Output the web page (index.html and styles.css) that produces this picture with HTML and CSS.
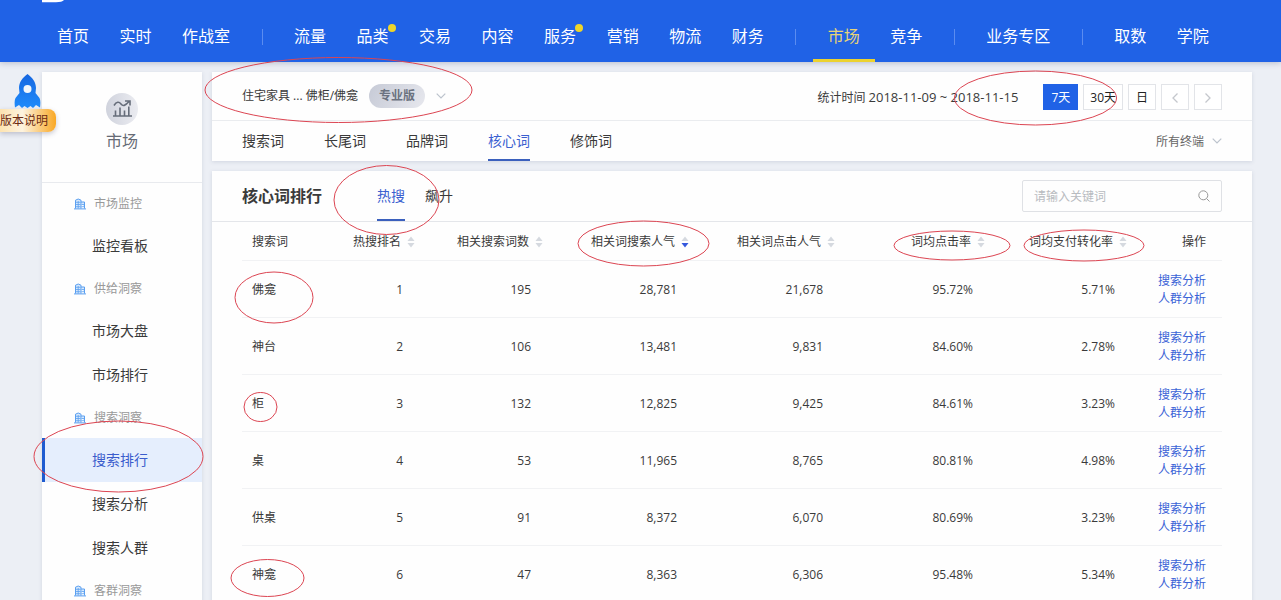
FILE: index.html
```html
<!DOCTYPE html>
<html lang="zh-CN">
<head>
<meta charset="utf-8">
<title>市场 - 搜索排行</title>
<link rel="stylesheet" href="styles.css">
</head>
<body>
<svg class="defs" width="0" height="0" aria-hidden="true">
  <defs>
    <symbol id="building" viewBox="0 0 12 12">
      <path d="M1.500 10.500V2.200L4.200 1 7 2.200v8.300M7 4h3.500v6.500M0 10.900h12" fill="#d6e8fc" stroke="#5a9ff0"/>
      <path d="M2 4.300h4.500M2 6.500h4.500M2 8.700h4.500M4.200 3v7.500M7.500 6.500h2.500M7.500 8.700h2.500" stroke="#5a9ff0" stroke-width=".8" fill="none"/>
    </symbol>
    <symbol id="chevron" viewBox="0 0 10 6">
      <path d="M.7.7 5 5 9.3.7" fill="none" stroke="currentColor" stroke-width="1.2"/>
    </symbol>
    <symbol id="sort-up" viewBox="0 0 8 12"><path d="M4 .5 7.500 5h-7z"/></symbol>
    <symbol id="sort-down" viewBox="0 0 8 12"><path d="M4 11.500.5 7h7z"/></symbol>
  </defs>
</svg>

<header class="topbar">
  <svg class="logo" viewBox="0 0 22 3" aria-hidden="true"><path d="M0 0h22q-2 2.200-8 2.200H0z" fill="#fff"/></svg>
  <nav class="nav">
    <a href="#">首页</a>
    <a href="#">实时</a>
    <a href="#">作战室</a>
    <span class="divider"></span>
    <a href="#">流量</a>
    <a href="#" class="dot">品类</a>
    <a href="#">交易</a>
    <a href="#">内容</a>
    <a href="#" class="dot">服务</a>
    <a href="#">营销</a>
    <a href="#">物流</a>
    <a href="#">财务</a>
    <span class="divider"></span>
    <a href="#" class="active">市场</a>
    <a href="#">竞争</a>
    <span class="divider"></span>
    <a href="#">业务专区</a>
    <span class="divider"></span>
    <a href="#">取数</a>
    <a href="#">学院</a>
  </nav>
</header>

<div class="page">
  <aside class="sidebar">
    <div class="side-head">
      <svg class="side-icon" viewBox="0 0 32 32" aria-hidden="true">
        <defs><linearGradient id="disc" x1="0" y1="0" x2="1" y2="0"><stop offset="0" stop-color="#d0d3dd"/><stop offset="1" stop-color="#ebecf1"/></linearGradient></defs>
        <circle cx="16" cy="16" r="16" fill="url(#disc)"/>
        <path d="M7 23h19M9.500 22.500v-5M14 22.500v-8M18.500 22.500v-5M22.800 22.500v-9M8 12.500c2.500-4 5-4 7-1.500s4 2 8-2.500M19 8h5v4.500" fill="none" stroke="#666d7a" stroke-width="1.600"/>
      </svg>
      <span>市场</span>
    </div>
    <h3><svg><use href="#building"/></svg>市场监控</h3>
    <a href="#">监控看板</a>
    <h3><svg><use href="#building"/></svg>供给洞察</h3>
    <a href="#">市场大盘</a>
    <a href="#">市场排行</a>
    <h3><svg><use href="#building"/></svg>搜索洞察</h3>
    <a href="#" class="active">搜索排行</a>
    <a href="#">搜索分析</a>
    <a href="#">搜索人群</a>
    <h3><svg><use href="#building"/></svg>客群洞察</h3>
  </aside>

  <main class="main">
    <section class="card">
      <div class="filter">
        <button type="button" class="category">住宅家具 ... 佛柜/佛龛 <span class="badge">专业版</span><svg class="chev"><use href="#chevron"/></svg></button>
        <div class="dates">
          <span class="period">统计时间 <span class="range">2018-11-09 ~ 2018-11-15</span></span>
          <button type="button" class="btn on">7天</button>
          <button type="button" class="btn">30天</button>
          <button type="button" class="btn">日</button>
          <button type="button" class="btn" aria-label="上一个"><svg class="arrow" viewBox="0 0 8 12"><path d="M6.500 1.500 2 6l4.500 4.500"/></svg></button>
          <button type="button" class="btn" aria-label="下一个"><svg class="arrow" viewBox="0 0 8 12"><path d="M1.500 1.500 6 6l-4.500 4.500"/></svg></button>
        </div>
      </div>
      <div class="tabs-row">
        <nav class="tabs">
          <a href="#">搜索词</a>
          <a href="#">长尾词</a>
          <a href="#">品牌词</a>
          <a href="#" class="active">核心词</a>
          <a href="#">修饰词</a>
        </nav>
        <label class="terminal">
          <select aria-label="终端"><option>所有终端</option></select>
          <svg class="chev"><use href="#chevron"/></svg>
        </label>
      </div>
    </section>

    <section class="card rank">
      <div class="rank-head">
        <h2>核心词排行</h2>
        <nav class="subtabs">
          <a href="#" class="active">热搜</a>
          <a href="#">飙升</a>
        </nav>
        <label class="search">
          <input type="text" placeholder="请输入关键词" aria-label="关键词">
          <svg viewBox="0 0 12 12"><circle cx="5.300" cy="5.300" r="4.500"/><path d="M8.600 8.600 11.500 11.500"/></svg>
        </label>
      </div>
      <div class="table-wrap">
        <table>
          <colgroup><col class="c1"><col class="c2"><col class="c3"><col class="c4"><col class="c4"><col class="c5"><col class="c6"><col class="c7"></colgroup>
          <thead>
            <tr>
              <th>搜索词</th>
              <th>热搜排名<svg class="sort"><use href="#sort-up"/><use href="#sort-down"/></svg></th>
              <th>相关搜索词数<svg class="sort"><use href="#sort-up"/><use href="#sort-down"/></svg></th>
              <th>相关词搜索人气<svg class="sort"><use href="#sort-up"/><use class="on" href="#sort-down"/></svg></th>
              <th>相关词点击人气<svg class="sort"><use href="#sort-up"/><use href="#sort-down"/></svg></th>
              <th>词均点击率<svg class="sort"><use href="#sort-up"/><use href="#sort-down"/></svg></th>
              <th>词均支付转化率<svg class="sort"><use href="#sort-up"/><use href="#sort-down"/></svg></th>
              <th>操作</th>
            </tr>
          </thead>
          <tbody>
            <tr><td>佛龛</td><td>1</td><td>195</td><td>28,781</td><td>21,678</td><td>95.72%</td><td>5.71%</td><td><a href="#">搜索分析</a><a href="#">人群分析</a></td></tr>
            <tr><td>神台</td><td>2</td><td>106</td><td>13,481</td><td>9,831</td><td>84.60%</td><td>2.78%</td><td><a href="#">搜索分析</a><a href="#">人群分析</a></td></tr>
            <tr><td>柜</td><td>3</td><td>132</td><td>12,825</td><td>9,425</td><td>84.61%</td><td>3.23%</td><td><a href="#">搜索分析</a><a href="#">人群分析</a></td></tr>
            <tr><td>桌</td><td>4</td><td>53</td><td>11,965</td><td>8,765</td><td>80.81%</td><td>4.98%</td><td><a href="#">搜索分析</a><a href="#">人群分析</a></td></tr>
            <tr><td>供桌</td><td>5</td><td>91</td><td>8,372</td><td>6,070</td><td>80.69%</td><td>3.23%</td><td><a href="#">搜索分析</a><a href="#">人群分析</a></td></tr>
            <tr><td>神龛</td><td>6</td><td>47</td><td>8,363</td><td>6,306</td><td>95.48%</td><td>5.34%</td><td><a href="#">搜索分析</a><a href="#">人群分析</a></td></tr>
          </tbody>
        </table>
      </div>
    </section>
  </main>
</div>

<a href="#" class="version">
  <svg viewBox="0 0 28 35" aria-hidden="true">
    <defs><linearGradient id="hull" x1="0" y1="0" x2="0" y2="1"><stop offset="0" stop-color="#1767e0"/><stop offset="1" stop-color="#1f8bfb"/></linearGradient></defs>
    <path d="M13.500 0c5 3.500 8.500 8.500 8.500 14l-.5 5 4 5c1.200 2.500 1 6 .5 9.500l-4-2.500-3 3-2.500-2-3 2-3-2-2.500 2-3-3-4 2.500C.5 30 .3 26.500 1.500 24l4-5-.5-5c0-5.500 3.500-10.500 8.500-14z" fill="url(#hull)"/>
    <circle cx="13.500" cy="15" r="4" fill="#f2f6fb"/>
  </svg>
  <span>版本说明</span>
</a>

<svg class="marks" width="1281" height="600" viewBox="0 0 1281 600" aria-hidden="true">
  <ellipse cx="338.500" cy="90" rx="133.500" ry="32.500"/>
  <ellipse cx="1035.500" cy="98" rx="81" ry="27"/>
  <ellipse cx="386.500" cy="200" rx="52.500" ry="34.500"/>
  <ellipse cx="643.500" cy="243.500" rx="65.500" ry="22.500"/>
  <ellipse cx="952" cy="245.500" rx="58" ry="14.500"/>
  <ellipse cx="1084" cy="245.500" rx="60" ry="15.500"/>
  <ellipse cx="274" cy="297.500" rx="39" ry="25.500"/>
  <ellipse cx="260.500" cy="407" rx="16.500" ry="14.500"/>
  <ellipse cx="118.500" cy="456.500" rx="84.500" ry="35.500"/>
  <ellipse cx="267.500" cy="578" rx="36.500" ry="18.500"/>
</svg>
</body>
</html>
```

FILE: styles.css
```css
* { box-sizing: border-box; }

body {
  margin: 0;
  height: 100vh;
  overflow: hidden;
  position: relative;
  background: #eceff5;
  color: #3a3a3a;
  font: 12px/18px "Open Sans", "Noto Sans CJK SC", sans-serif;
}

a { color: inherit; text-decoration: none; }
button, input, select { font: inherit; color: inherit; }
h2, h3 { margin: 0; font-weight: 400; }
.defs { position: absolute; }

.topbar {
  position: relative;
  height: 62px;
  padding: 12px 57px 0 42px;
  background: #2062e6;
  box-shadow: 0 1px 6px rgba(60, 70, 110, 0.3);
}
.logo { position: absolute; left: 42px; top: 0; width: 22px; height: 3px; }
.nav {
  display: flex;
  justify-content: space-between;
  align-items: center;
  height: 50px;
  font-size: 16px;
  color: #fff;
}
.nav a {
  position: relative;
  height: 50px;
  padding: 0 15px;
  line-height: 48px;
  white-space: nowrap;
}
.nav .active { color: #e8d477; border-bottom: 3px solid #ecd22e; }
.nav .dot::after {
  content: "";
  position: absolute;
  right: 8px;
  top: 12px;
  width: 8px;
  height: 8px;
  border-radius: 50%;
  background: #edd52a;
}
.divider { width: 1px; height: 16px; margin: 0 16px; background: #5b8cf0; }

.page { display: flex; gap: 10px; padding: 10px 29px 0 42px; }

.sidebar, .card { background: #fefefe; box-shadow: 0 1px 4px rgba(70, 80, 120, 0.16); }
.sidebar { flex: 0 0 160px; }
.side-head {
  display: flex;
  flex-direction: column;
  align-items: center;
  gap: 4px;
  height: 111px;
  padding-top: 21px;
  border-bottom: 1px solid #e8eaee;
  font-size: 16px;
  line-height: 24px;
  color: #666b75;
}
.side-icon { width: 32px; height: 32px; }
.sidebar h3 {
  display: flex;
  align-items: center;
  gap: 8px;
  height: 41px;
  padding-left: 32px;
  font-size: 12px;
  color: #999;
}
.sidebar h3 svg { width: 12px; height: 12px; }
.sidebar a {
  display: block;
  height: 44px;
  padding-left: 50px;
  font-size: 14px;
  line-height: 44px;
}
.sidebar .active {
  padding-left: 47px;
  border-left: 3px solid #1e5bd0;
  background: #e5eefd;
  color: #3a5ccc;
}

.main { flex: 1; min-width: 0; display: flex; flex-direction: column; gap: 10px; }
.filter, .tabs-row, .rank-head {
  display: flex;
  justify-content: space-between;
  align-items: center;
  padding: 0 30px;
}
.filter { height: 49px; border-bottom: 1px solid #eaecef; }
.category {
  display: flex;
  align-items: center;
  gap: 11px;
  padding: 0;
  border: 0;
  background: none;
}
.badge {
  padding: 0 10px;
  border-radius: 12px;
  background: linear-gradient(120deg, #c6cad6, #e7e8ee);
  color: #6b7280;
  font-weight: 700;
  line-height: 24px;
}
.chev { width: 10px; height: 6px; color: #bcc3cd; }
.dates { display: flex; align-items: center; gap: 5px; padding-top: 2px; }
.period { margin-right: 20px; white-space: nowrap; }
.range { font-size: 13px; }
.btn {
  display: flex;
  align-items: center;
  justify-content: center;
  min-width: 28px;
  height: 26px;
  padding: 1px 6px 0;
  border: 1px solid #e2e4e8;
  background: #fff;
  color: #222;
}
.btn.on { padding: 1px 7px 0; border-color: #2062e6; background: #2062e6; color: #fff; }
.arrow { width: 8px; height: 12px; fill: none; stroke: #c4c7cc; stroke-width: 1.3; }

.tabs-row { height: 40px; }
.tabs { display: flex; gap: 40px; font-size: 14px; }
.tabs a, .subtabs a { border-bottom: 2px solid transparent; }
.tabs a { height: 40px; line-height: 40px; }
.tabs .active, .subtabs .active { border-color: #3b60bd; color: #3a5fd0; }
.terminal { display: flex; align-items: center; gap: 7px; color: #666; }
.terminal select {
  padding: 2px 0 0;
  border: 0;
  background: none;
  appearance: none;
}

.rank { flex: 1; }
.rank-head { height: 51px; border-bottom: 1px solid #e4e6ea; }
.rank-head h2 { font-size: 16px; font-weight: 700; line-height: 24px; }
.subtabs { display: flex; gap: 20px; margin: 0 auto 0 55px; font-size: 14px; }
.subtabs a { height: 50px; line-height: 50px; }
.search {
  display: flex;
  align-items: center;
  width: 200px;
  height: 32px;
  padding: 0 11px;
  border: 1px solid #dfe1e5;
  border-radius: 2px;
}
.search input {
  flex: 1;
  min-width: 0;
  padding: 1px 0 0;
  border: 0;
  outline: 0;
  background: none;
}
.search input::placeholder { color: #b8bbc0; }
.search svg { width: 12px; height: 12px; fill: none; stroke: #999; }

.table-wrap { padding: 0 30px; }
table { width: 100%; table-layout: fixed; border-spacing: 0; }
.c1 { width: 90px; }
.c2 { width: 83px; }
.c3 { width: 128px; }
.c4 { width: 146px; }
.c5 { width: 150px; }
.c6 { width: 142px; }
.c7 { width: 95px; }
th, td { border-bottom: 1px solid #f1f2f4; text-align: right; white-space: nowrap; }
th { height: 39px; padding: 2px 0 0; font-weight: 400; }
td { height: 57px; padding: 1px 12px 0 0; }
th:first-child, td:first-child { padding-left: 10px; text-align: left; }
th:last-child, td:last-child { padding-right: 16px; }
td a { display: block; color: #3a62d6; }
.sort { width: 8px; height: 12px; margin-left: 6px; vertical-align: -2px; fill: #d5d9df; }
.sort .on { fill: #3558dd; }

.version {
  position: absolute;
  left: 0;
  top: 74px;
  display: flex;
  flex-direction: column;
  color: #6b2a12;
}
.version svg { width: 28px; height: 35px; margin-left: 14px; }
.version span {
  padding-right: 8px;
  border-radius: 0 8px 8px 0;
  background: linear-gradient(90deg, #fde3b0, #fdf3df 40%, #f9a825);
  box-shadow: 0 2px 5px rgba(80, 80, 110, 0.3);
  line-height: 23px;
}

.marks { position: absolute; left: 0; top: 0; pointer-events: none; fill: none; stroke: #dc4552; }
```
